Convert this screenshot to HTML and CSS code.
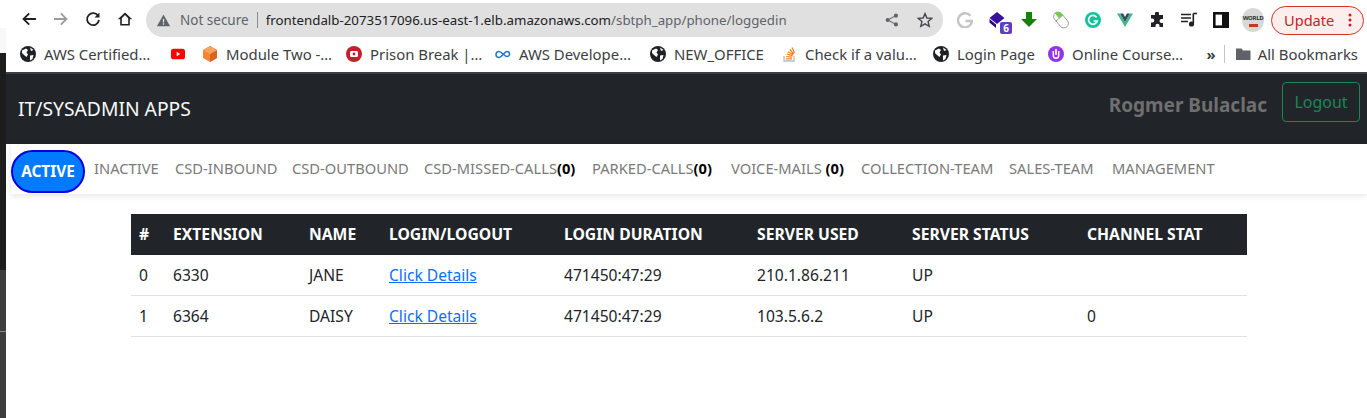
FILE: index.html
```html
<!DOCTYPE html>
<html lang="en">
<head>
    <meta charset="UTF-8">
    <title>IT/SYSADMIN APPS</title>
    <link rel="stylesheet" href="styles.css">
</head>
<body>

<div class="window">
    <div class="strip">
        <div class="strip-light"></div>
        <div class="strip-dark"></div>
        <div class="strip-grey"></div>
        <div class="strip-line"></div>
        <div class="strip-grey strip-fill"></div>
    </div>

    <div class="main">
        <div class="browser">
            <div class="toolbar">
                <div class="nav-btns">
                    <svg class="nav-icon" viewBox="0 0 16 16"><path d="M15 8H2.500M8.200 2.300 2.500 8l5.700 5.700" fill="none" stroke="#202124" stroke-width="1.800"/></svg>
                    <svg class="nav-icon" viewBox="0 0 16 16"><path d="M1 8h12.500M7.800 2.300 13.500 8l-5.700 5.700" fill="none" stroke="#9b9c9e" stroke-width="1.800"/></svg>
                    <svg class="nav-icon" viewBox="0 0 16 16"><path d="M13.300 5.200A6 6 0 1 0 14 9" fill="none" stroke="#202124" stroke-width="1.800"/><path d="M14.500 1.500v5h-5z" fill="#202124"/></svg>
                    <svg class="nav-icon" viewBox="0 0 16 16"><path d="M8 1.500.8 8.200h2.400v6.300h9.600V8.200h2.400zM4.800 13V7.200L8 4l3.200 3.200V13z" fill="#202124"/></svg>
                </div>
                <div class="omnibox">
                    <svg class="warn" viewBox="0 0 16 16"><path d="M8 1.500 15 14H1z" fill="#5f6368"/><path d="M7.300 6h1.400v4.200H7.300zM7.300 11h1.400v1.400H7.300z" fill="#e0e0e0"/></svg>
                    <span class="not-secure">Not secure</span>
                    <span class="omni-sep"></span>
                    <span class="url">frontendalb-2073517096.us-east-1.elb.amazonaws.com<span class="url-path">/sbtph_app/phone/loggedin</span></span>
                    <svg class="share" viewBox="0 0 16 16"><circle cx="12.500" cy="3" r="2.300" fill="#5f6368"/><circle cx="12.500" cy="13" r="2.300" fill="#5f6368"/><circle cx="3" cy="8" r="2.300" fill="#5f6368"/><path d="M12.500 3 3 8l9.500 5" fill="none" stroke="#5f6368" stroke-width="1.200"/></svg>
                    <svg class="star" viewBox="0 0 16 16"><path d="m8 1.600 1.900 4.400 4.800.4-3.600 3.200 1.100 4.700L8 11.800l-4.200 2.500 1.100-4.700-3.600-3.200 4.800-.4z" fill="none" stroke="#46484b" stroke-width="1.400"/></svg>
                </div>
                <div class="extensions">
                    <svg class="ext" viewBox="0 0 16 16"><path d="M13.400 3.800A7 7 0 1 0 15 9H8.600" fill="none" stroke="#c4c4c4" stroke-width="2.400"/></svg>
                    <div class="ext ext-layers">
                        <svg viewBox="0 0 16 16"><path d="M8 0 15.500 6 8 12 .5 6z" fill="#3a109c"/><path d="M.5 7v3.500L7 16v-3.500z" fill="#2a0b78"/></svg>
                        <span class="ext-badge">6</span>
                    </div>
                    <svg class="ext" viewBox="0 0 16 16"><path d="M5 0h6v7h5l-8 8-8-8h5z" fill="#18800f"/></svg>
                    <svg class="ext ext-mouse" viewBox="0 0 16 16"><g transform="rotate(-40 8 8)"><rect x="3.500" y="-1" width="9" height="18" rx="4.500" fill="#fff" stroke="#8a8a8a" stroke-width=".8"/><path d="M3.500 5.500h9M8 -1v6.500" stroke="#8a8a8a" stroke-width=".8" fill="none"/><path d="M8 -1h.2a4.300 4.300 0 0 1 4.300 4.300v2.200H8z" fill="#6fcf3f"/></g></svg>
                    <svg class="ext" viewBox="0 0 16 16"><circle cx="8" cy="8" r="8" fill="#15c39a"/><path d="M11.600 5.400A4.400 4.400 0 1 0 12.200 9H8.800" fill="none" stroke="#fff" stroke-width="1.700"/></svg>
                    <svg class="ext" viewBox="0 0 16 16"><path d="M0 1.500h3.200L8 10l4.800-8.500H16L8 15z" fill="#41b883"/><path d="M3.200 1.500h3L8 5l1.800-3.500h3L8 10z" fill="#35495e"/></svg>
                    <svg class="ext" viewBox="0 0 16 16"><path d="M6 1.500a2 2 0 0 1 4 0V3h4v4h-1.500a2 2 0 0 0 0 4H14v4h-3.500v-1.200a2 2 0 0 0-4 0V15H2v-4.500h1.300a2 2 0 0 0 0-4H2V3h4z" fill="#202124"/></svg>
                    <svg class="ext" viewBox="0 0 16 16"><path d="M0 2.500h10M0 6h10M0 9.500h7" stroke="#202124" stroke-width="1.500" fill="none"/><path d="M12.300 1.500v10" stroke="#202124" stroke-width="1.600"/><path d="M12.300 1.500H16" stroke="#202124" stroke-width="1.600"/><circle cx="10.500" cy="12" r="2.600" fill="#202124"/></svg>
                    <svg class="ext" viewBox="0 0 16 16"><rect x="1.300" y="1.300" width="13.400" height="13.400" fill="none" stroke="#111" stroke-width="2.600"/><rect x="9" y="2" width="5" height="12" fill="#111"/></svg>
                    <div class="ext-world"><span class="world-text">WORLD</span><span class="world-red"></span></div>
                </div>
                <div class="update">
                    <span>Update</span>
                    <svg class="update-dots" viewBox="0 0 4 16"><circle cx="2" cy="3" r="1.500"/><circle cx="2" cy="8" r="1.500"/><circle cx="2" cy="13" r="1.500"/></svg>
                </div>
            </div>

            <div class="bookmarks">
                <div class="bookmark"><svg class="bm-icon" viewBox="0 0 16 16"><use href="#globe"/></svg>AWS Certified…</div>
                <div class="bookmark"><svg class="bm-yt" viewBox="0 0 16 16"><rect y="2" width="16" height="12" rx="3" fill="#f00"/><path d="M6.500 5.500v5l4-2.500z" fill="#fff"/></svg></div>
                <div class="bookmark"><svg class="bm-icon" viewBox="0 0 16 16"><path d="M8 0 15 4v8l-7 4-7-4V4z" fill="#f58536"/><path d="M8 8v8l7-4V4z" fill="#d9661f"/><path d="M8 8 15 4 8 0 1 4z" fill="#f9a25e"/></svg>Module Two -…</div>
                <div class="bookmark"><svg class="bm-icon" viewBox="0 0 16 16"><circle cx="8" cy="8" r="8" fill="#c4202b"/><rect x="4" y="5" width="8" height="6" rx="1.500" fill="#fff"/><circle cx="8" cy="8" r="1.400" fill="#c4202b"/></svg>Prison Break |…</div>
                <div class="bookmark"><svg class="bm-icon" viewBox="0 0 16 16"><path d="M4 11.500a3 3 0 0 1 0-6c2.500 0 5.500 5 8 5a2.500 2.500 0 0 0 0-5c-2.500 0-5.500 6-8 6z" fill="none" stroke="#2a7bc4" stroke-width="1.600"/></svg>AWS Develope…</div>
                <div class="bookmark"><svg class="bm-icon" viewBox="0 0 16 16"><use href="#globe"/></svg>NEW_OFFICE</div>
                <div class="bookmark"><svg class="bm-icon" viewBox="0 0 16 16"><path d="M3 10v5h10v-5" fill="none" stroke="#bcbbbb" stroke-width="1.300"/><path d="M5 12.800h6M5.200 10.500l6 .6M5.800 8.200l5.800 1.500M7 5.800l5.200 3M8.800 3.500l4 4.500M11 1.500l2.500 5.500" stroke="#f48024" stroke-width="1.200" fill="none"/></svg>Check if a valu…</div>
                <div class="bookmark"><svg class="bm-icon" viewBox="0 0 16 16"><use href="#globe"/></svg>Login Page</div>
                <div class="bookmark"><svg class="bm-icon" viewBox="0 0 16 16"><circle cx="8" cy="8" r="8" fill="#9334e6"/><path d="M5.300 5v4.500a2.700 2.700 0 0 0 5.400 0V5" fill="none" stroke="#fff" stroke-width="1.500"/><rect x="7.200" y="3" width="1.600" height="6" fill="#fff"/></svg>Online Course…</div>
                <div class="bm-end">
                    <span class="chevrons">»</span>
                    <span class="bm-sep"></span>
                    <svg class="folder" viewBox="0 0 16 16"><path d="M1 2.500h5.500L8 4.500h7.500V14H1z" fill="#5f6368"/></svg>
                    <span>All Bookmarks</span>
                </div>
            </div>
        </div>

        <div class="page">
            <header class="topbar">
                <div class="brand">IT/SYSADMIN APPS</div>
                <div class="user">
                    <span class="user-name">Rogmer Bulaclac</span>
                    <a class="btn-logout">Logout</a>
                </div>
            </header>

            <nav class="tabs">
                <a class="tab tab-active">ACTIVE</a>
                <a class="tab">INACTIVE</a>
                <a class="tab">CSD-INBOUND</a>
                <a class="tab">CSD-OUTBOUND</a>
                <a class="tab">CSD-MISSED-CALLS<b>(0)</b></a>
                <a class="tab">PARKED-CALLS<b>(0)</b></a>
                <a class="tab">VOICE-MAILS <b>(0)</b></a>
                <a class="tab">COLLECTION-TEAM</a>
                <a class="tab">SALES-TEAM</a>
                <a class="tab">MANAGEMENT</a>
            </nav>

            <table class="agents">
                <thead>
                    <tr>
                        <th class="col-num">#</th>
                        <th class="col-ext">EXTENSION</th>
                        <th class="col-name">NAME</th>
                        <th class="col-login">LOGIN/LOGOUT</th>
                        <th class="col-dur">LOGIN DURATION</th>
                        <th class="col-server">SERVER USED</th>
                        <th class="col-status">SERVER STATUS</th>
                        <th>CHANNEL STAT</th>
                    </tr>
                </thead>
                <tbody>
                    <tr>
                        <td>0</td>
                        <td>6330</td>
                        <td>JANE</td>
                        <td><a href="#">Click Details</a></td>
                        <td>471450:47:29</td>
                        <td>210.1.86.211</td>
                        <td>UP</td>
                        <td></td>
                    </tr>
                    <tr>
                        <td>1</td>
                        <td>6364</td>
                        <td>DAISY</td>
                        <td><a href="#">Click Details</a></td>
                        <td>471450:47:29</td>
                        <td>103.5.6.2</td>
                        <td>UP</td>
                        <td>0</td>
                    </tr>
                </tbody>
            </table>
        </div>
    </div>
</div>

<svg class="defs" width="0" height="0">
    <symbol id="globe" viewBox="0 0 16 16">
        <circle cx="8" cy="8" r="8" fill="#202124"/>
        <path d="M2 4.500 6 2.500 8 4 6.500 6.500 8 8.500 6.500 11 4 9 2 7zM10 9.500l3.500-.5-1 4-2.500 1.500zM10 1.500l3.500 2.500-2.500 1z" fill="#fff"/>
    </symbol>
</svg>

</body>
</html>
```

FILE: styles.css
```css
html, body {
    margin: 0;
    padding: 0;
    height: 418px;
    overflow: hidden;
    background: white;
    font-family: "Noto Sans", Arial, sans-serif;
}
.defs {
    position: absolute;
}
.window {
    display: flex;
    height: 418px;
}
.strip {
    width: 6px;
    flex: none;
    display: flex;
    flex-direction: column;
}
.strip-light {
    height: 53px;
    background: #f8f8f8;
    border-top: 28px solid white;
    box-sizing: border-box;
}
.strip-dark {
    height: 217px;
    background: #1d1d1d;
}
.strip-grey {
    height: 61px;
    background: #3e3e3e;
}
.strip-line {
    height: 1px;
    background: #8a8a8a;
}
.strip-fill {
    flex: 1;
}
.main {
    flex: 1;
    min-width: 0;
}

/* browser chrome */
.browser {
    background: white;
}
.toolbar {
    height: 38px;
    display: flex;
    align-items: center;
    padding-left: 15px;
}
.nav-btns {
    display: flex;
    gap: 16px;
    width: 125px;
    flex: none;
}
.nav-icon {
    width: 16px;
    height: 16px;
}
.omnibox {
    width: 797px;
    height: 34px;
    flex: none;
    background: #e0e0e0;
    border-radius: 17px;
    display: flex;
    align-items: center;
    padding: 0 10px;
    box-sizing: border-box;
    margin-top: 2px;
}
.warn {
    width: 15px;
    height: 15px;
    margin-right: 9px;
}
.not-secure {
    color: #5f6368;
    font-size: 13.5px;
}
.omni-sep {
    width: 1px;
    height: 16px;
    background: #8a8c8e;
    margin: 0 8px;
}
.url {
    color: #202124;
    flex: 1;
    white-space: nowrap;
    font-size: 13.3px;
}
.url-path {
    color: #5f6368;
}
.share {
    width: 14px;
    height: 14px;
    margin-right: 18px;
}
.star {
    width: 16px;
    height: 16px;
}
.extensions {
    display: flex;
    align-items: center;
    margin-left: 14px;
    gap: 16px;
    flex: none;
    margin-top: 2px;
}
.ext {
    width: 16px;
    height: 16px;
    display: block;
    flex: none;
}
.ext-mouse {
    overflow: visible;
}
.ext-layers {
    position: relative;
}
.ext-layers svg {
    display: block;
    width: 16px;
    height: 16px;
}
.ext-badge {
    position: absolute;
    right: -7px;
    bottom: -6px;
    width: 12px;
    height: 12px;
    background: #5f3dc4;
    color: white;
    font-size: 10px;
    font-weight: bold;
    line-height: 12px;
    text-align: center;
    border-radius: 2px;
}
.ext-world {
    width: 22px;
    height: 24px;
    border-radius: 50%;
    background: #d8d8d8;
    color: #2f2f2f;
    display: flex;
    flex-direction: column;
    align-items: center;
    justify-content: center;
    margin-left: -3px;
}
.world-text {
    font-size: 6px;
    font-weight: bold;
    line-height: 9px;
    letter-spacing: -0.3px;
}
.world-red {
    width: 9px;
    height: 3px;
    background: #c0392b;
    margin-top: 1px;
}
.update {
    margin-left: 7px;
    width: 93px;
    height: 29px;
    box-sizing: border-box;
    border: 1px solid #d93025;
    border-radius: 15px;
    background: #fbeeed;
    color: #c5221f;
    font-size: 14.6px;
    display: flex;
    align-items: center;
    justify-content: space-between;
    padding: 0 11px 0 12px;
    margin-top: 2px;
    flex: none;
}
.update-dots {
    width: 4px;
    height: 16px;
    fill: #c5221f;
}
.bookmarks {
    height: 36px;
    display: grid;
    grid-template-columns: 151px 31px 144px 149px 155px 131px 152px 115px 152px 1fr;
    align-items: center;
    padding: 0 0 2px 14px;
    font-size: 14.9px;
    color: #3c4043;
    border-bottom: 2px solid #3c4043;
    box-sizing: border-box;
    white-space: nowrap;
}
.bookmark {
    display: flex;
    align-items: center;
    gap: 8px;
}
.bm-icon {
    width: 16px;
    height: 16px;
    flex: none;
}
.bm-yt {
    width: 14px;
    height: 14px;
}
.bm-end {
    justify-self: end;
    display: flex;
    align-items: center;
    padding-right: 9px;
}
.chevrons {
    font-weight: bold;
    margin-right: 8px;
}
.bm-sep {
    width: 1px;
    height: 18px;
    background: #c4c4c4;
    margin-right: 10px;
}
.folder {
    width: 16px;
    height: 16px;
    margin-right: 7px;
}

/* page */
.topbar {
    height: 70px;
    background: #212529;
    display: flex;
    align-items: center;
    justify-content: space-between;
    padding: 0 7px 0 12px;
}
.brand {
    color: #f8f9fa;
    font-size: 19.3px;
    padding-bottom: 2px;
}
.user {
    display: flex;
    align-items: center;
    gap: 15px;
    align-self: flex-start;
    margin-top: 8px;
}
.user-name {
    color: #6f6f6f;
    font-weight: bold;
    font-size: 19px;
    margin-top: 6px;
}
.btn-logout {
    border: 1px solid #198754;
    color: #198754;
    border-radius: 4px;
    width: 78px;
    height: 40px;
    box-sizing: border-box;
    display: flex;
    align-items: center;
    justify-content: center;
    font-size: 16px;
}
.tabs {
    height: 50px;
    display: grid;
    grid-template-columns: 83px 81px 117px 132px 168px 139px 130px 148px 103px 1fr;
    align-items: center;
    margin-left: 5px;
    box-shadow: 0 2px 6px rgba(0,0,0,0.1);
    font-size: 14.7px;
    color: #7a7a7a;
    white-space: nowrap;
}
.tab {
    padding-bottom: 3px;
}
.tab b {
    color: black;
}
.tab-active {
    background: #007bff;
    border: 2px solid #0000e0;
    border-radius: 22px;
    box-sizing: border-box;
    color: white;
    font-size: 15.4px;
    font-weight: bold;
    width: 74px;
    height: 43px;
    display: flex;
    align-items: center;
    justify-content: center;
    margin-top: 5px;
    padding: 0;
}
.agents {
    border-collapse: collapse;
    margin: 20px 0 0 125px;
    width: 1116px;
    table-layout: fixed;
    color: #212529;
}
.agents th {
    background: #212529;
    color: white;
    text-align: left;
    height: 41px;
    padding: 0 8px 1px;
    box-sizing: border-box;
    font-size: 15.7px;
    font-weight: bold;
}
.agents td {
    height: 41px;
    padding: 1px 8px 0;
    box-sizing: border-box;
    font-size: 15.6px;
    border-bottom: 1px solid #dee2e6;
}
.agents tbody tr:first-child td {
    height: 40px;
    padding-top: 0;
}
.agents a {
    color: #0d6efd;
}
.col-num { width: 34px; }
.col-ext { width: 136px; }
.col-name { width: 80px; }
.col-login { width: 175px; }
.col-dur { width: 193px; }
.col-server { width: 155px; }
.col-status { width: 175px; }
```
